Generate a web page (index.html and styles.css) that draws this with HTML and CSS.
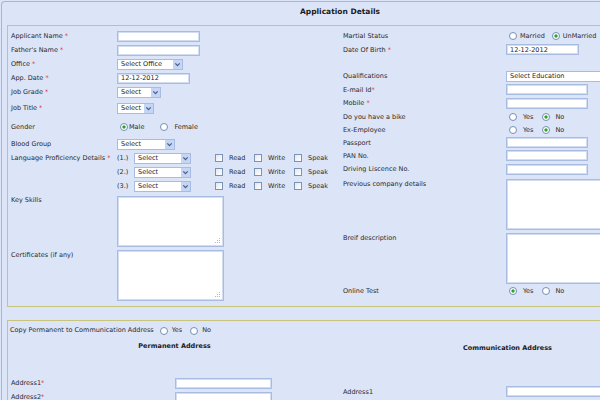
FILE: index.html
```html
<!DOCTYPE html>
<html>
<head>
<meta charset="utf-8">
<title>Application Details</title>
<link rel="stylesheet" href="styles.css">
</head>
<body>
<div class="panel">
  <div class="title">Application Details</div>

  <div class="box box1">
    <div class="col left">
      <div class="row h14"><span class="lbl">Applicant Name <b class="req">*</b></span><input class="in w83" type="text"></div>
      <div class="row h14"><span class="lbl">Father's Name <b class="req">*</b></span><input class="in w83" type="text"></div>
      <div class="row h14"><span class="lbl">Office <b class="req">*</b></span><span class="sel w66"><span class="stxt">Select Office</span><span class="arr"><svg width="9" height="9" viewBox="0 0 9 9"><rect x="0" y="0" width="9" height="9" fill="#c4d5f6"/><path d="M2.3 3.4 L4.5 5.6 L6.7 3.4" fill="none" stroke="#4b5f8c" stroke-width="1.3"/></svg></span></span></div>
      <div class="row h14"><span class="lbl">App. Date <b class="req">*</b></span><input class="in w73" type="text" value="12-12-2012"></div>
      <div class="row h14"><span class="lbl">Job Grade <b class="req">*</b></span><span class="sel w44"><span class="stxt">Select</span><span class="arr"><svg width="9" height="9" viewBox="0 0 9 9"><rect x="0" y="0" width="9" height="9" fill="#c4d5f6"/><path d="M2.3 3.4 L4.5 5.6 L6.7 3.4" fill="none" stroke="#4b5f8c" stroke-width="1.3"/></svg></span></span></div>
      <div class="row h18"><span class="lbl">Job Title <b class="req">*</b></span><span class="sel w37"><span class="stxt">Select</span><span class="arr"><svg width="9" height="9" viewBox="0 0 9 9"><rect x="0" y="0" width="9" height="9" fill="#c4d5f6"/><path d="M2.3 3.4 L4.5 5.6 L6.7 3.4" fill="none" stroke="#4b5f8c" stroke-width="1.3"/></svg></span></span></div>
      <div class="row h20"><span class="lbl">Gender</span>
        <span class="grp gender"><input class="rd" type="radio" name="g" checked><span class="rl">Male</span><input class="rd" type="radio" name="g"><span class="rl">Female</span></span>
      </div>
      <div class="row h14"><span class="lbl">Blood Group</span><span class="sel w58"><span class="stxt">Select</span><span class="arr"><svg width="9" height="9" viewBox="0 0 9 9"><rect x="0" y="0" width="9" height="9" fill="#c4d5f6"/><path d="M2.3 3.4 L4.5 5.6 L6.7 3.4" fill="none" stroke="#4b5f8c" stroke-width="1.3"/></svg></span></span></div>
      <div class="row h14"><span class="lbl">Language Proficiency Details <b class="req">*</b></span><span class="num">(1.)</span><span class="sel w57"><span class="stxt">Select</span><span class="arr"><svg width="9" height="9" viewBox="0 0 9 9"><rect x="0" y="0" width="9" height="9" fill="#c4d5f6"/><path d="M2.3 3.4 L4.5 5.6 L6.7 3.4" fill="none" stroke="#4b5f8c" stroke-width="1.3"/></svg></span></span>
        <span class="checks"><span class="ck"><input class="cb" type="checkbox">Read</span><span class="ck"><input class="cb" type="checkbox">Write</span><span class="ck"><input class="cb" type="checkbox">Speak</span></span>
      </div>
      <div class="row h14"><span class="lbl"></span><span class="num">(2.)</span><span class="sel w57"><span class="stxt">Select</span><span class="arr"><svg width="9" height="9" viewBox="0 0 9 9"><rect x="0" y="0" width="9" height="9" fill="#c4d5f6"/><path d="M2.3 3.4 L4.5 5.6 L6.7 3.4" fill="none" stroke="#4b5f8c" stroke-width="1.3"/></svg></span></span>
        <span class="checks"><span class="ck"><input class="cb" type="checkbox">Read</span><span class="ck"><input class="cb" type="checkbox">Write</span><span class="ck"><input class="cb" type="checkbox">Speak</span></span>
      </div>
      <div class="row h14"><span class="lbl"></span><span class="num">(3.)</span><span class="sel w57"><span class="stxt">Select</span><span class="arr"><svg width="9" height="9" viewBox="0 0 9 9"><rect x="0" y="0" width="9" height="9" fill="#c4d5f6"/><path d="M2.3 3.4 L4.5 5.6 L6.7 3.4" fill="none" stroke="#4b5f8c" stroke-width="1.3"/></svg></span></span>
        <span class="checks"><span class="ck"><input class="cb" type="checkbox">Read</span><span class="ck"><input class="cb" type="checkbox">Write</span><span class="ck"><input class="cb" type="checkbox">Speak</span></span>
      </div>
      <div class="row top h55 pt3"><span class="lbl">Key Skills</span><span class="ta"><textarea></textarea><svg class="grip" width="6" height="6" viewBox="0 0 6 6"><rect x="4" y="0" width="1" height="1"/><rect x="2" y="2" width="1" height="1"/><rect x="4" y="2" width="1" height="1"/><rect x="0" y="4" width="1" height="1"/><rect x="2" y="4" width="1" height="1"/><rect x="4" y="4" width="1" height="1"/></svg></span></div>
      <div class="row top h54 pt2"><span class="lbl lt">Certificates (if any)</span><span class="ta"><textarea></textarea><svg class="grip" width="6" height="6" viewBox="0 0 6 6"><rect x="4" y="0" width="1" height="1"/><rect x="2" y="2" width="1" height="1"/><rect x="4" y="2" width="1" height="1"/><rect x="0" y="4" width="1" height="1"/><rect x="2" y="4" width="1" height="1"/><rect x="4" y="4" width="1" height="1"/></svg></span></div>
    </div>

    <div class="col right">
      <div class="row h14"><span class="lbl">Martial Status</span>
        <span class="grp marital"><input class="rd" type="radio" name="m"><span class="rl">Married</span><input class="rd" type="radio" name="m" checked><span class="rl">UnMarried</span></span>
      </div>
      <div class="row h13"><span class="lbl">Date Of Birth <b class="req">*</b></span><input class="in w73" type="text" value="12-12-2012"></div>
      <div class="row h13"></div>
      <div class="row h14"><span class="lbl">Qualifications</span><span class="sel w110"><span class="stxt">Select Education</span><span class="arr"><svg width="9" height="9" viewBox="0 0 9 9"><rect x="0" y="0" width="9" height="9" fill="#c4d5f6"/><path d="M2.3 3.4 L4.5 5.6 L6.7 3.4" fill="none" stroke="#4b5f8c" stroke-width="1.3"/></svg></span></span></div>
      <div class="row h13"><span class="lbl">E-mail Id<b class="req">*</b></span><input class="in w82" type="text"></div>
      <div class="row h14"><span class="lbl">Mobile <b class="req">*</b></span><input class="in w82" type="text"></div>
      <div class="row h13"><span class="lbl">Do you have a bike</span>
        <span class="grp yn"><input class="rd" type="radio" name="b"><span class="rl">Yes</span><input class="rd" type="radio" name="b" checked><span class="rl">No</span></span>
      </div>
      <div class="row h13"><span class="lbl">Ex-Employee</span>
        <span class="grp yn"><input class="rd" type="radio" name="e"><span class="rl">Yes</span><input class="rd" type="radio" name="e" checked><span class="rl">No</span></span>
      </div>
      <div class="row h13"><span class="lbl">Passport</span><input class="in w82" type="text"></div>
      <div class="row h13"><span class="lbl">PAN No.</span><input class="in w82" type="text"></div>
      <div class="row h14"><span class="lbl">Driving Liscence No.</span><input class="in w82" type="text"></div>
      <div class="row top h54 pt3"><span class="lbl lt">Previous company details</span><span class="ta"><textarea></textarea></span></div>
      <div class="row top h54 pt3"><span class="lbl lt2">Breif description</span><span class="ta"><textarea></textarea></span></div>
      <div class="row h14"><span class="lbl">Online Test</span>
        <span class="grp yn"><input class="rd" type="radio" name="o" checked><span class="rl">Yes</span><input class="rd" type="radio" name="o"><span class="rl">No</span></span>
      </div>
    </div>
  </div>

  <div class="box box2">
    <div class="copy">Copy Permanent to Communication Address
      <span class="grp cp"><input class="rd" type="radio" name="c"><span class="rl">Yes</span><input class="rd" type="radio" name="c"><span class="rl">No</span></span>
    </div>
    <div class="cols">
      <div class="col left2">
        <div class="sub sub1">Permanent Address</div>
        <div class="row h14"><span class="lbl">Address1<b class="req">*</b></span><input class="in w97" type="text"></div>
        <div class="row h14"><span class="lbl">Address2<b class="req">*</b></span><input class="in w97" type="text"></div>
      </div>
      <div class="col right2">
        <div class="sub sub2">Communication Address</div>
        <div class="row h13"><span class="lbl">Address1</span><input class="in w97" type="text"></div>
      </div>
    </div>
  </div>
</div>
</body>
</html>
```

FILE: styles.css
```css
html, body {
  margin: 0;
  padding: 0;
}
body {
  width: 600px;
  height: 400px;
  overflow: hidden;
  background: #dce4f7;
  font-family: "DejaVu Sans", Verdana, sans-serif;
  font-size: 6.5px;
  color: #2a2a2a;
}
.panel {
  margin: 1px 0 0 1px;
  width: 676px;
  border-top: 1px solid #a3b7dd;
  border-left: 1px solid #a3b7dd;
  border-top-left-radius: 4px;
}
.title {
  height: 23px;
  line-height: 20px;
  text-align: center;
  font-weight: bold;
  font-size: 7.5px;
  color: #1a1a1a;
}
.box {
  margin-left: 5px;
  width: 666px;
  border: 1px solid #c8c47a;
}
.box1 {
  display: flex;
  padding: 3px 0 4px 0;
}
.box2 {
  margin-top: 13px;
  padding: 3px 0 10px 0;
}
.col {
  display: flex;
  flex-direction: column;
}
.left { width: 327px; padding-left: 3px; }
.right { width: 329px; padding-left: 5px; }
.left2 { width: 327px; padding-left: 3px; }
.right2 { width: 329px; padding-left: 5px; }

.row {
  display: flex;
  align-items: center;
  flex: none;
}
.row.top { align-items: flex-start; }
.h13 { height: 13px; }
.h14 { height: 14px; }
.h18 { height: 18px; }
.h20 { height: 20px; }
.h54 { height: 54px; box-sizing: border-box; }
.h55 { height: 55px; box-sizing: border-box; }
.pt2 { padding-top: 2px; }
.pt3 { padding-top: 3px; }

.lbl {
  width: 106px;
  flex: none;
  white-space: nowrap;
  line-height: 8px;
}
.right .lbl, .right2 .lbl { width: 163px; }
.left2 .lbl { width: 164px; }
.lt { padding-top: 1px; }
.lt2 { padding-top: 1px; }
.req { color: #e8262b; font-weight: normal; }

.in {
  box-sizing: border-box;
  height: 11px;
  margin: 0;
  padding: 0 3px;
  border: 1px solid #a8bce2;
  box-shadow: inset 0 0 0 1px #d3ddf2;
  background: #fff;
  font: inherit;
  color: #222;
  outline: none;
}
.w73 { width: 73px; }
.w82 { width: 82px; }
.w83 { width: 83px; }
.w97 { width: 97px; }

.sel {
  box-sizing: border-box;
  height: 11px;
  display: inline-flex;
  align-items: center;
  justify-content: space-between;
  border: 1px solid #a8bce2;
  background: #fff;
  padding: 0 0 0 3px;
  flex: none;
  color: #222;
}
.sel .arr {
  display: flex;
  margin-right: 0;
}
.sel .arr svg { display: block; }
.w37 { width: 37px; }
.w44 { width: 44px; }
.w57 { width: 57px; }
.w58 { width: 58px; }
.w66 { width: 66px; }
.w110 { width: 110px; }

.num { width: 17px; flex: none; }

.checks { display: flex; margin-left: 24px; }
.ck { display: flex; align-items: center; width: 39px; }
.ck:nth-child(2) { width: 40px; }
.cb {
  appearance: none;
  -webkit-appearance: none;
  width: 8px;
  height: 8px;
  margin: 0 6px 0 0;
  border: 1px solid #7d93b5;
  background: linear-gradient(135deg, #e4e8ef, #fff);
  box-sizing: border-box;
}

.grp { display: flex; align-items: center; }
.rd {
  appearance: none;
  -webkit-appearance: none;
  box-sizing: border-box;
  width: 8px;
  height: 8px;
  margin: 0 3px 0 3px;
  border: 1px solid #7690b5;
  border-radius: 50%;
  background: #fff;
  flex: none;
}
.rd:checked {
  background: radial-gradient(circle, #24a624 0, #24a624 1.3px, #fff 1.9px);
}
.gender .rd:first-child { margin-right: 1px; }
.gender .rl:nth-of-type(1) { margin-right: 13px; }
.gender .rl:nth-of-type(2) { margin-left: 3px; }
.marital .rl { margin-right: 4px; }
.yn .rl { padding-left: 3px; margin-right: 5px; }
.cp { display: inline-flex; vertical-align: middle; margin-left: 3px; }
.cp .rl { padding-left: 1px; margin-right: 5px; }

.ta { position: relative; display: block; width: 107px; height: 51px; flex: none; }
.ta textarea {
  box-sizing: border-box;
  display: block;
  width: 107px;
  height: 51px;
  margin: 0;
  border: 1px solid #a8bce2;
  box-shadow: inset 0 0 0 1px #d3ddf2;
  background: #fff;
  resize: none;
  outline: none;
}
.grip { position: absolute; right: 3px; bottom: 3px; fill: #b0b8c8; }

.copy {
  padding-left: 2px;
  height: 13px;
  line-height: 13px;
  display: flex;
  align-items: center;
}
.cols { display: flex; }
.sub {
  text-align: center;
  font-weight: bold;
  line-height: 8px;
  color: #1a1a1a;
}
.sub1 { margin: 5px 0 26px 0; }
.sub2 { margin: 7px 0 33px 0; }
```
